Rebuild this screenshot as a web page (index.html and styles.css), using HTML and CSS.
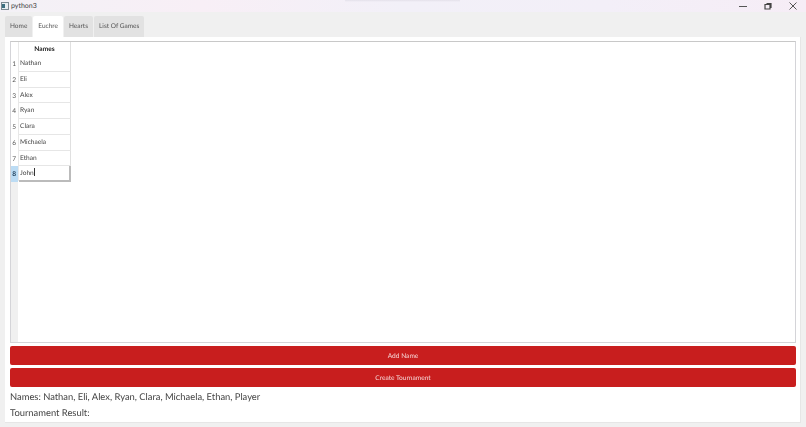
FILE: index.html
```html
<!DOCTYPE html>
<html lang="en">
<head>
    <meta charset="UTF-8">
    <meta name="viewport" content="width=device-width, initial-scale=1.0">
    <title>python3</title>
    <link rel="stylesheet" href="styles.css">
</head>
<body>
    <div class="window">
        <div class="titlebar">
            <svg class="app-icon" width="8" height="8" viewBox="0 0 8 8">
                <rect x="0.5" y="0.5" width="7" height="7" fill="#e8eef2" stroke="#7d8a92"/>
                <rect x="1" y="2" width="3" height="4" fill="#3d6f80"/>
            </svg>
            <span class="app-name">python3</span>
            <div class="window-controls">
                <svg width="8" height="8" viewBox="0 0 8 8"><path d="M0 4.5H8" stroke="#555" stroke-width="1"/></svg>
                <svg width="8" height="8" viewBox="0 0 8 8"><path d="M2.5 1.5H7V6M1 2.5H6V7H1Z" fill="none" stroke="#444" stroke-width="1.2"/></svg>
                <svg width="8" height="8" viewBox="0 0 8 8"><path d="M0.5 0.5L7.5 7.5M7.5 0.5L0.5 7.5" stroke="#555" stroke-width="1"/></svg>
            </div>
        </div>

        <div class="tabs">
            <div class="tab">Home</div>
            <div class="tab active">Euchre</div>
            <div class="tab">Hearts</div>
            <div class="tab">List Of Games</div>
        </div>

        <div class="panel">
            <div class="table">
                <div class="row-numbers">
                    <div class="corner"></div>
                    <div class="num">1</div>
                    <div class="num">2</div>
                    <div class="num">3</div>
                    <div class="num">4</div>
                    <div class="num">5</div>
                    <div class="num">6</div>
                    <div class="num">7</div>
                    <div class="num selected">8</div>
                </div>
                <div class="names">
                    <div class="names-head">Names</div>
                    <div class="cell">Nathan</div>
                    <div class="cell">Eli</div>
                    <div class="cell">Alex</div>
                    <div class="cell">Ryan</div>
                    <div class="cell">Clara</div>
                    <div class="cell">Michaela</div>
                    <div class="cell">Ethan</div>
                    <div class="cell editing">John<span class="caret"></span></div>
                </div>
            </div>

            <div class="button">Add Name</div>
            <div class="button">Create Tournament</div>

            <div class="label">Names: Nathan, Eli, Alex, Ryan, Clara, Michaela, Ethan, Player</div>
            <div class="label">Tournament Result:</div>
        </div>
    </div>
</body>
</html>
```

FILE: styles.css
```css
html, body {
    margin: 0;
    padding: 0;
}
body {
    width: 806px;
    height: 427px;
    overflow: hidden;
    background-color: #f0f0f0;
    font-family: Lato, "Open Sans", sans-serif;
    color: #333;
    text-rendering: geometricPrecision;
}
.window {
    display: flex;
    flex-direction: column;
    height: 427px;
    filter: blur(0.3px);
}
.titlebar {
    display: flex;
    align-items: center;
    height: 12px;
    padding-left: 1px;
    background:
        linear-gradient(#e4e1ea, transparent) 345px 0 / 115px 2px no-repeat,
        linear-gradient(90deg, #f3f1f6 0%, #f8eff6 25%, #f2f0f8 50%, #f3eff8 75%, #f6edf6 100%);
    font-size: 7px;
}
.app-icon {
    margin-right: 2px;
}
.app-name {
    color: #444;
}
.window-controls {
    display: flex;
    gap: 17px;
    margin-left: auto;
    margin-right: 9px;
}
.tabs {
    display: flex;
    gap: 1px;
    height: 21px;
    margin-top: 4px;
    padding-left: 5px;
}
.tab {
    padding: 0 5px;
    line-height: 22px;
    font-size: 6.5px;
    color: #555;
    background-color: #e2e2e2;
    border-radius: 2px 2px 0 0;
}
.tab.active {
    background-color: #fff;
}
.panel {
    width: 786px;
    height: 376px;
    margin: 0 5px;
    padding: 4px 4px 5px 5px;
    background-color: #fff;
    border-bottom: 1px solid #e6e6e6;
    border-right: 1px solid #e6e6e6;
}
.table {
    display: flex;
    height: 300px;
    margin-bottom: 3px;
    border: 1px solid #d4d4d8;
    border-top-color: #c8c8c8;
}
.row-numbers {
    display: flex;
    flex-direction: column;
    width: 7px;
    background-color: #f0f0f0;
}
.corner {
    height: 14px;
    background-color: #fff;
}
.num {
    height: 15.75px;
    padding-right: 2px;
    box-sizing: border-box;
    background-color: #fff;
    font-size: 6.6px;
    line-height: 17px;
    text-align: right;
    color: #555;
}
.num.selected {
    background-color: #bcdcf4;
    font-weight: bold;
    color: #1a3a55;
}
.names {
    width: 52px;
    height: 139px;
    border-left: 1px solid #e8e8e8;
}
.names-head {
    height: 14px;
    line-height: 15px;
    font-size: 6.6px;
    font-weight: bold;
    text-align: center;
    color: #222;
    border-right: 1px solid #e0e0e0;
}
.cell {
    height: 15.75px;
    box-sizing: border-box;
    padding-left: 1px;
    font-size: 6.6px;
    line-height: 14px;
    color: #444;
    border-right: 1px solid #e0e0e0;
    border-bottom: 1px solid #e6e6e6;
}
.cell.editing {
    line-height: 15px;
    border-right: 2px solid #bbb;
    border-bottom: 2px solid #bbb;
}
.caret {
    display: inline-block;
    width: 1px;
    height: 8px;
    vertical-align: -1px;
    background-color: #333;
}
.button {
    height: 19px;
    margin-bottom: 3px;
    background-color: #c81e1e;
    border-radius: 2px;
    color: #f6d6d6;
    font-size: 6.6px;
    line-height: 20px;
    text-align: center;
}
.label {
    height: 16px;
    font-size: 9.4px;
    line-height: 15px;
    color: #444;
}
```
